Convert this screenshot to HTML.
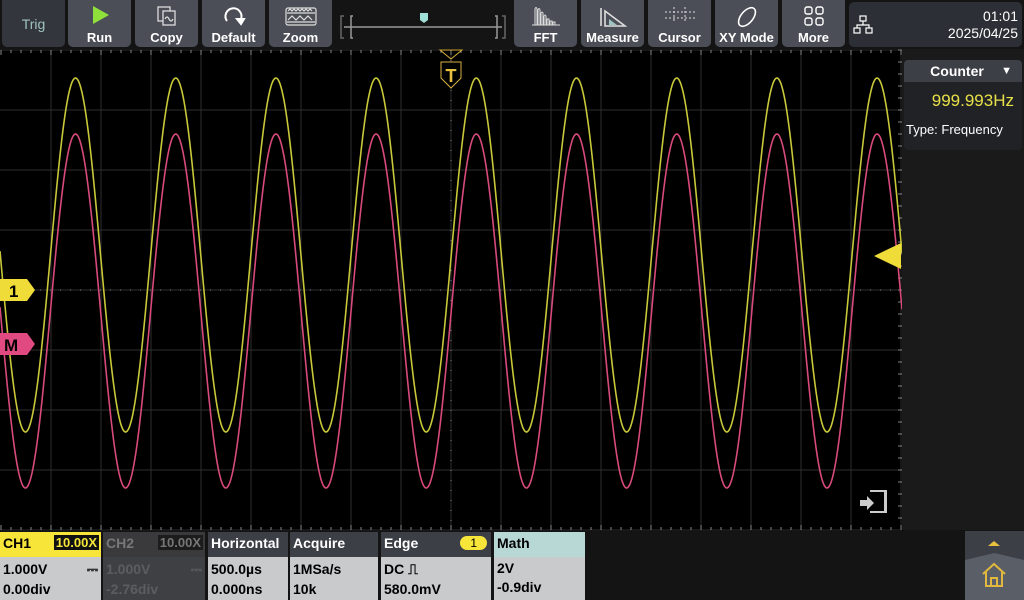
<!DOCTYPE html>
<html><head><meta charset="utf-8"><style>
*{margin:0;padding:0;box-sizing:border-box}
body{width:1024px;height:600px;background:#141414;overflow:hidden;position:relative;font-family:"Liberation Sans",sans-serif;color:#fff}
.btn{position:absolute;top:0;height:47px;width:63px;background:#4b4e56;border-radius:0 0 5px 5px;text-align:center;font-size:13px;font-weight:bold}
.btn .l{position:absolute;bottom:2px;left:0;right:0}
.btn svg{position:absolute;left:50%;transform:translateX(-50%);top:5px}
.box{position:absolute;top:532px;height:68px}
.hd{height:25px;font-weight:bold;font-size:14px;padding:3px 3px;position:relative}
.bd{height:43px;background:#c9cacc;color:#000;font-weight:bold;font-size:14px;padding:2px 3px;line-height:20px}
</style></head><body>
<div class="btn" style="left:2px;background:#33363c;font-weight:normal;color:#9fc3c0"><div style="position:absolute;top:16px;left:0;right:0;font-size:14px">Trig</div></div>
<div class="btn" style="left:68px"><svg width="20" height="20"><polygon points="3,1 19,10 3,19" fill="#8fe03a"/></svg><div class="l">Run</div></div>
<div class="btn" style="left:135px"><svg width="24" height="22" fill="none" stroke="#ddd" stroke-width="1.3"><rect x="3" y="2" width="12" height="14"/><rect x="8" y="6" width="12" height="14" fill="#4b4e56"/><path d="M10 14q2-4 4 0t4 0"/></svg><div class="l">Copy</div></div>
<div class="btn" style="left:202px"><svg width="26" height="22" fill="none" stroke="#fff" stroke-width="2"><path d="M20 14A8 8 0 1 0 6 16"/><path d="M16 14l4 5 3-5z" fill="#fff"/></svg><div class="l">Default</div></div>
<div class="btn" style="left:269px"><svg width="34" height="22" fill="none" stroke="#ddd" stroke-width="1.2"><rect x="2" y="3" width="30" height="17" rx="2"/><path d="M3 8h28M3 17h28M4 6l2-2 2 2 2-2 2 2 2-2 2 2 2-2 2 2 2-2 2 2 2-2 2 2M4 15l4-4 4 4 4-4 4 4 4-4 4 4"/></svg><div class="l">Zoom</div></div>
<svg style="position:absolute;left:338px;top:12px" width="172" height="30" fill="none" stroke="#999" stroke-width="1.5"><path d="M6 4h-3v22h3M164 4h3v22h-3" stroke="#666"/><path d="M15 4h-2v22h2M157 4h2v22h-2M6 15h158"/><path d="M82 1h8v7l-4 3-4-3z" fill="#9fe0d8" stroke="none"/></svg>
<div class="btn" style="left:514px"><svg width="32" height="22" fill="none" stroke="#ddd" stroke-width="1"><path d="M2 20h28M5 20V4q1-3 2 0v16M8 20V5q1-3 2 0v15M11 20V8q1-2 2 0v12M14 20v-9q1-2 2 0v9M17 20v-6h2v6M20 20v-4h2v4M23 20v-3h2v3"/></svg><div class="l">FFT</div></div>
<div class="btn" style="left:581px"><svg width="32" height="24" fill="none" stroke="#ddd" stroke-width="1.6"><path d="M4 3v18M8 6l20 15H8z"/><path d="M12 14l8 6h-8z" fill="#9fc3c0" stroke="none"/></svg><div class="l">Measure</div></div>
<div class="btn" style="left:648px"><svg width="34" height="20" fill="none" stroke="#ddd" stroke-width="1" stroke-dasharray="2 2"><path d="M2 7h30M2 13h30M11 2v16M22 2v16"/></svg><div class="l">Cursor</div></div>
<div class="btn" style="left:715px"><svg width="28" height="24" fill="none" stroke="#fff" stroke-width="1.6"><ellipse cx="14" cy="12" rx="6" ry="11" transform="rotate(40 14 12)"/></svg><div class="l">XY Mode</div></div>
<div class="btn" style="left:782px"><svg width="22" height="22" fill="none" stroke="#fff" stroke-width="1.4"><rect x="2" y="2" width="7" height="7" rx="2"/><rect x="13" y="2" width="7" height="7" rx="2"/><rect x="2" y="13" width="7" height="7" rx="2"/><rect x="13" y="13" width="7" height="7" rx="2"/></svg><div class="l">More</div></div>
<div style="position:absolute;left:849px;top:2px;width:173px;height:45px;background:#2c2f35;border-radius:5px">
<svg style="position:absolute;left:4px;top:13px" width="20" height="20" fill="none" stroke="#fff" stroke-width="1.2"><rect x="7" y="1" width="6" height="5"/><rect x="1" y="13" width="6" height="5"/><rect x="13" y="13" width="6" height="5"/><path d="M10 6v4M4 13v-3h12v3"/></svg>
<div style="position:absolute;right:4px;top:6px;text-align:right;font-size:14px;line-height:17px">01:01<br>2025/04/25</div></div>

<div style="position:absolute;left:0;top:49px;width:903px;height:482px;background:#000"></div>
<svg style="position:absolute;left:0;top:0" width="1024" height="600" id="sc"></svg>
<div style="position:absolute;left:902px;top:49px;width:122px;height:481px;background:#1a1a1b"></div>
<div style="position:absolute;left:904px;top:60px;width:118px;height:90px;background:#202226;border-radius:4px;overflow:hidden">
<div style="height:22px;background:#3c3f46;text-align:center;font-weight:bold;font-size:14px;line-height:22px;padding-right:12px">Counter<span style="position:absolute;right:10px;font-size:11px">▼</span></div>
<div style="text-align:right;padding-right:8px;color:#e8e048;font-size:17px;margin-top:9px">999.993Hz</div>
<div style="font-size:13px;margin:11px 0 0 2px">Type:&nbsp;Frequency</div></div>

<div class="box" style="left:0;width:101px"><div class="hd" style="background:#f7e53a;color:#000">CH1<span style="position:absolute;right:2px;top:3px;background:#111;color:#f7e53a;font-size:13px;padding:0 2px">10.00X</span></div><div class="bd">1.000V<span style="float:right">⎓</span><br>0.00div</div></div>
<div class="box" style="left:103px;width:102px"><div class="hd" style="background:#3a3a3c;color:#777">CH2<span style="position:absolute;right:2px;top:3px;background:#1c1c1c;color:#777;font-size:13px;padding:0 2px">10.00X</span></div><div class="bd" style="background:#3f4044;color:#5c5d60">1.000V<span style="float:right">⎓</span><br>-2.76div</div></div>
<div class="box" style="left:208px;width:80px"><div class="hd" style="background:#3c3f46">Horizontal</div><div class="bd">500.0µs<br>0.000ns</div></div>
<div class="box" style="left:290px;width:88px"><div class="hd" style="background:#3c3f46">Acquire</div><div class="bd">1MSa/s<br>10k</div></div>
<div class="box" style="left:381px;width:110px"><div class="hd" style="background:#3c3f46">Edge<span style="position:absolute;right:4px;top:4px;background:#f7e53a;color:#000;font-size:12px;font-weight:normal;border-radius:8px;padding:0 10px">1</span></div><div class="bd">DC ⎍<br>580.0mV</div></div>
<div class="box" style="left:494px;width:91px"><div class="hd" style="background:#b8d8d6;color:#000">Math</div><div class="bd" style="line-height:19px">2V<br>-0.9div</div></div>
<div style="position:absolute;left:965px;top:531px;width:59px;height:69px;background:#3c3f46">
<div style="position:absolute;left:0;top:22px;width:59px;height:47px;background:#5a5e66;clip-path:polygon(0 15%,50% 0,100% 15%,100% 100%,0 100%)"></div>
<svg style="position:absolute;left:0;top:0" width="59" height="69" fill="none" stroke="#e0b840" stroke-width="2"><path d="M23 15l6-5 6 5z" fill="#e8c040" stroke="none"/><path d="M18 43l11-10 11 10M21 41v14h16V41M26 55v-8h6v8"/></svg></div>
<script>
var s=document.getElementById('sc'),h='';
h+='<g stroke="#2e2e2e" stroke-width="1">';
for(var x=51;x<902;x+=50)h+='<line x1="'+x+'" y1="50" x2="'+x+'" y2="530"/>';
for(var y=50;y<=530;y+=60)h+='<line x1="0" y1="'+y+'" x2="902" y2="'+y+'"/>';
h+='</g><g stroke="#888" stroke-width="1" stroke-dasharray="1 9"><line x1="451" y1="50" x2="451" y2="530"/><line x1="0" y1="290" x2="902" y2="290"/></g>';
h+='<g stroke="#888">';for(var x=1;x<902;x+=10){h+='<line x1="'+x+'" y1="50" x2="'+x+'" y2="'+(x%50==1?55:53)+'"/><line x1="'+x+'" y1="530" x2="'+x+'" y2="'+(x%50==1?525:527)+'"/>';}
for(var y=50;y<530;y+=12){h+='<line x1="898" y1="'+y+'" x2="902" y2="'+y+'"/>';}
h+='</g>';
function w(c,col){var p='';for(var x=0;x<=902;x+=1){var y=c-177*Math.cos(2*Math.PI*(x-75.5)/100.2);p+=(x?'L':'M')+x+' '+y.toFixed(1);}return '<path d="'+p+'" fill="none" stroke="'+col+'" stroke-width="1.6"/>';}
h+=w(255,'#c8c83a')+w(311,'#d84a7c');
h+='<path d="M440 50h22l-11 9z" fill="none" stroke="#d8b040"/><path d="M441 62h20v16l-10 10-10-10z" fill="#000" stroke="#d8b040"/><text x="451" y="82" text-anchor="middle" font-size="18" font-weight="bold" fill="#e8c040" font-family="Liberation Sans">T</text>';
h+='<path d="M0 279h27l8 11-8 11H0z" fill="#f0dc38"/><text x="9" y="297" font-size="17" font-weight="bold" font-family="Liberation Sans" fill="#000">1</text>';
h+='<path d="M0 333h27l8 11-8 11H0z" fill="#e04a80"/><text x="4" y="351" font-size="17" font-weight="bold" font-family="Liberation Sans" fill="#000">M</text>';
h+='<path d="M874 256l27-13v26z" fill="#f0dc38"/>';
h+='<path d="M870 491h16v21h-16M885 491v21" fill="none" stroke="#ccc" stroke-width="2"/><path d="M860 500h7v-4l7 7-7 7v-4h-7z" fill="#ccc"/>';
s.innerHTML=h;
</script>
</body></html>
